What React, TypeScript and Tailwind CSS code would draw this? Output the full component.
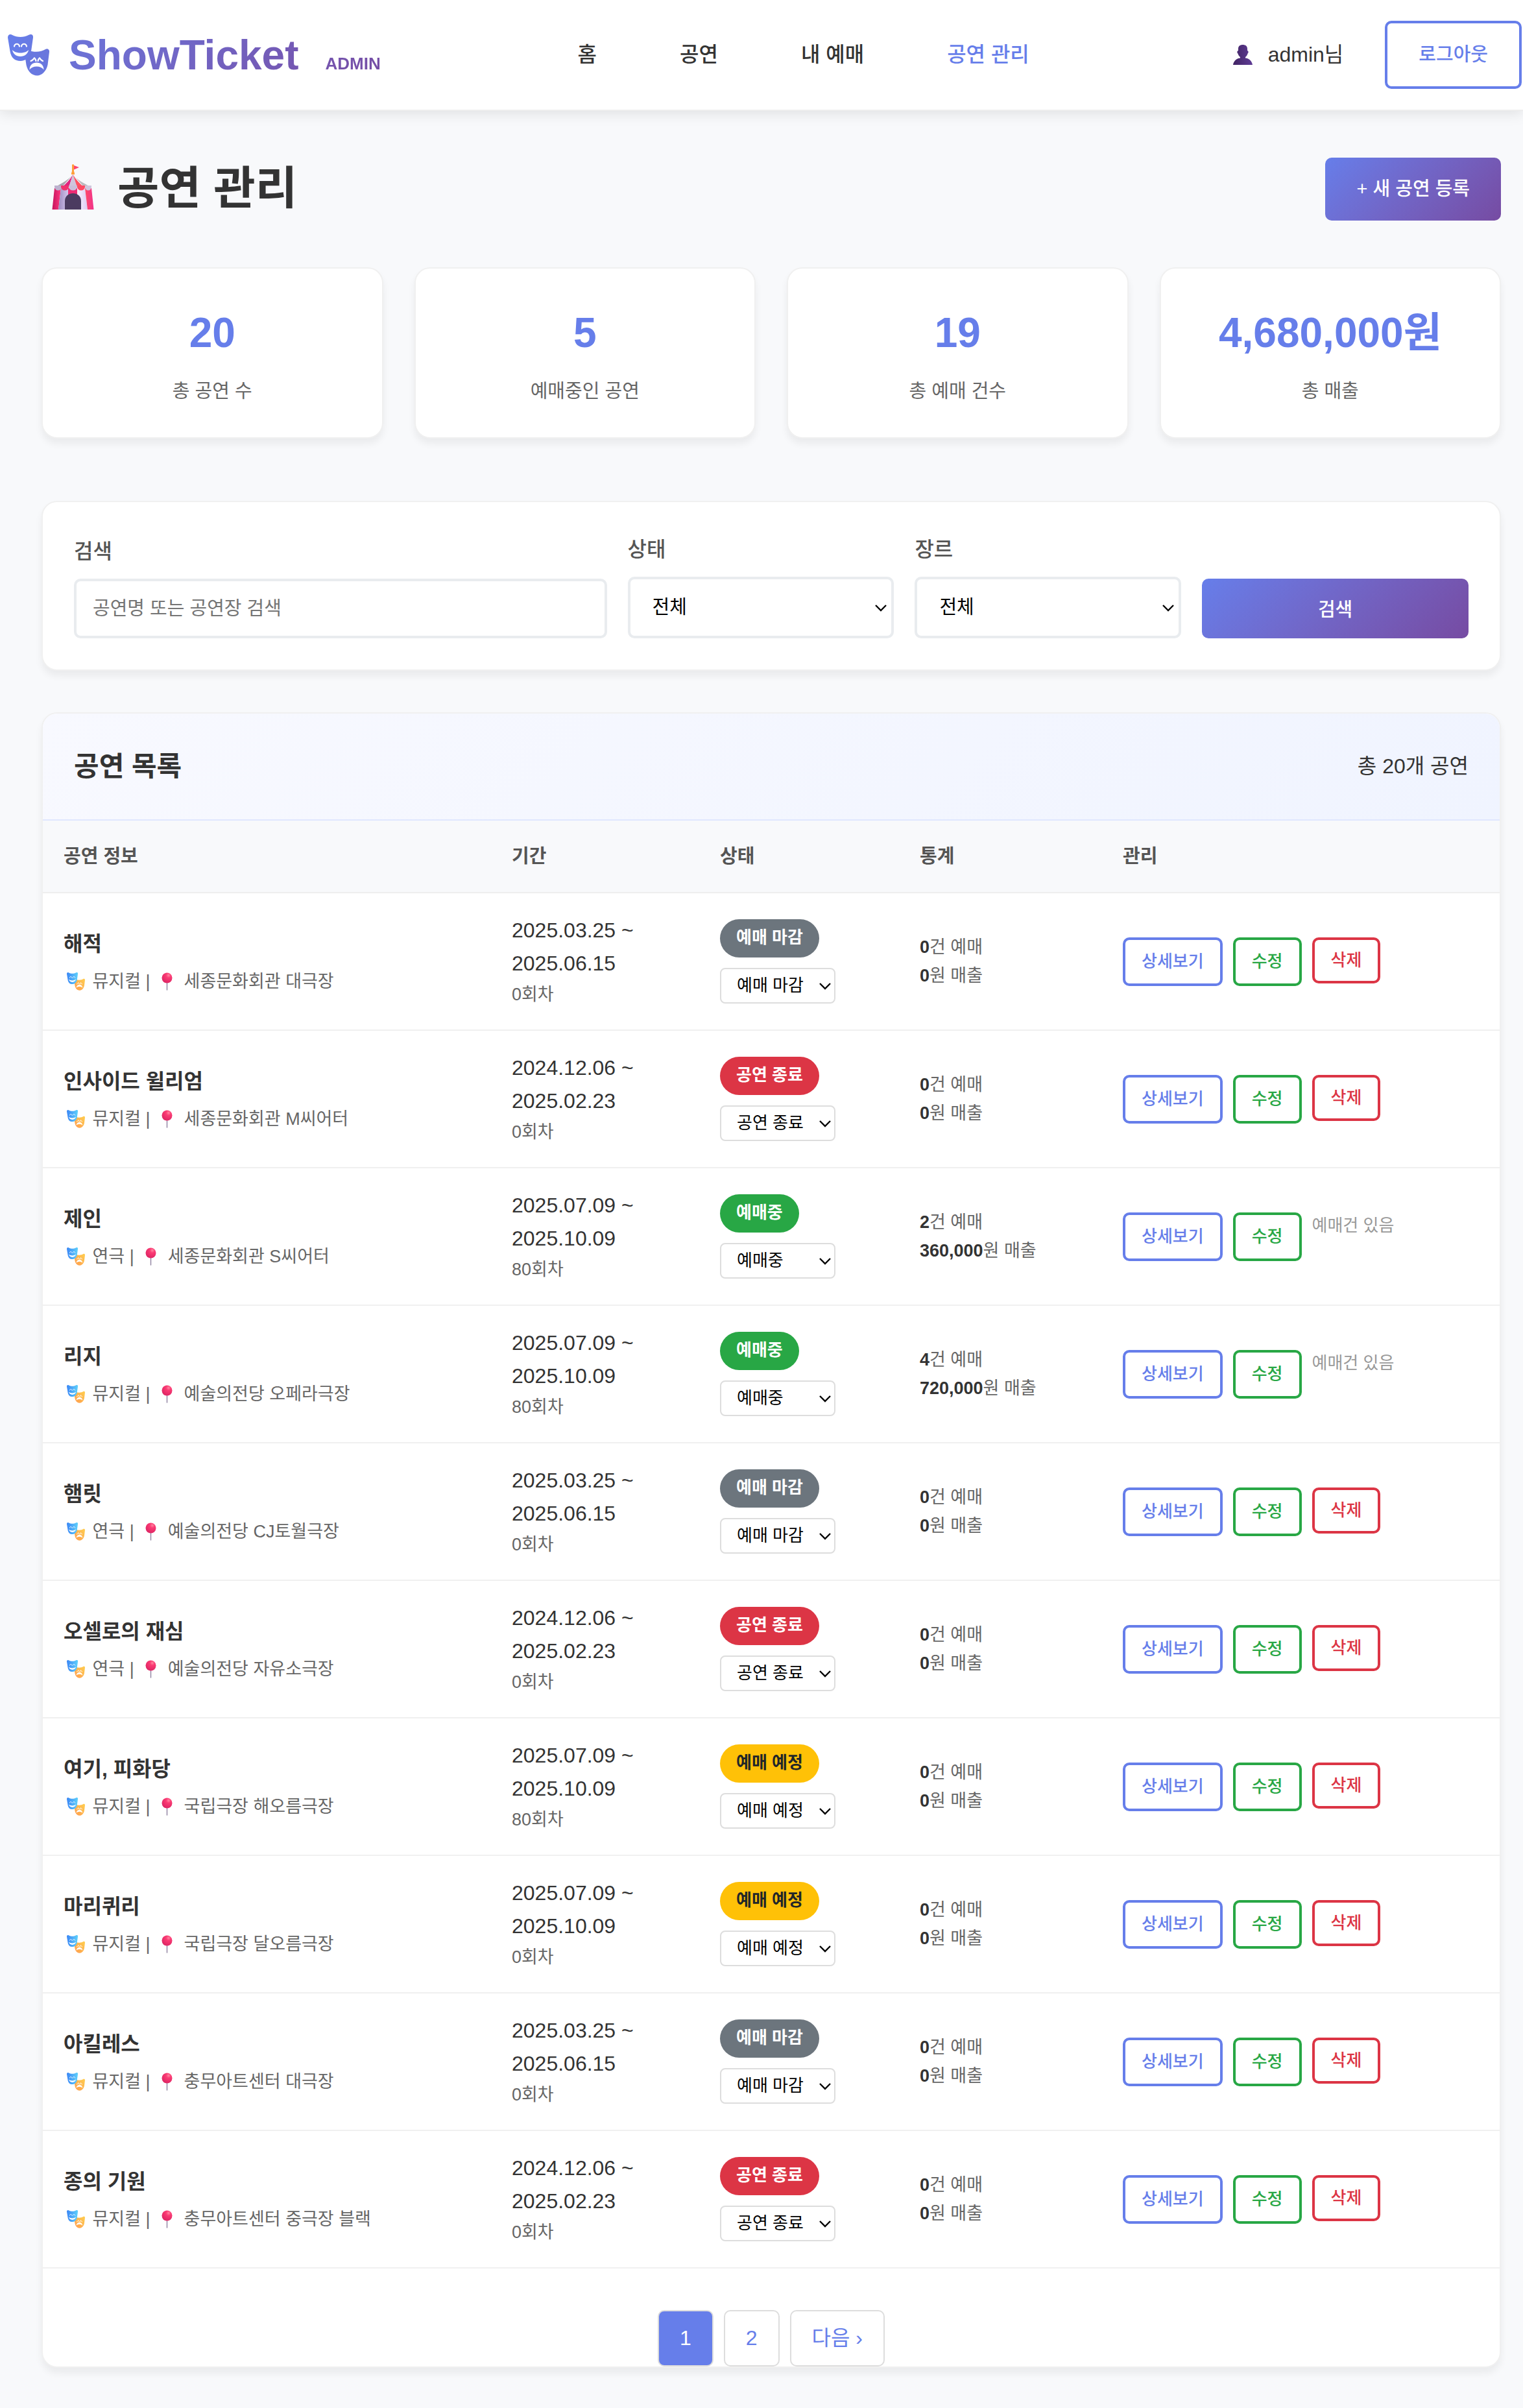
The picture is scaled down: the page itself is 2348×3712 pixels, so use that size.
import React from "react";

type Status = "예매 마감" | "공연 종료" | "예매중" | "예매 예정";

interface Show {
  title: string;
  genre: string;
  venue: string;
  start: string;
  end: string;
  rounds: number;
  status: Status;
  bookings: number;
  revenue: string;
}

const STATUSES: Status[] = ["예매 예정", "예매중", "예매 마감", "공연 종료"];

const BADGE: Record<Status, string> = {
  "예매 마감": "bg-[#6c757d] text-white",
  "공연 종료": "bg-[#dc3545] text-white",
  예매중: "bg-[#28a745] text-white",
  "예매 예정": "bg-[#ffc107] text-[#212529]",
};

const SHOWS: Show[] = [
  { title: "해적", genre: "뮤지컬", venue: "세종문화회관 대극장", start: "2025.03.25", end: "2025.06.15", rounds: 0, status: "예매 마감", bookings: 0, revenue: "0" },
  { title: "인사이드 윌리엄", genre: "뮤지컬", venue: "세종문화회관 M씨어터", start: "2024.12.06", end: "2025.02.23", rounds: 0, status: "공연 종료", bookings: 0, revenue: "0" },
  { title: "제인", genre: "연극", venue: "세종문화회관 S씨어터", start: "2025.07.09", end: "2025.10.09", rounds: 80, status: "예매중", bookings: 2, revenue: "360,000" },
  { title: "리지", genre: "뮤지컬", venue: "예술의전당 오페라극장", start: "2025.07.09", end: "2025.10.09", rounds: 80, status: "예매중", bookings: 4, revenue: "720,000" },
  { title: "햄릿", genre: "연극", venue: "예술의전당 CJ토월극장", start: "2025.03.25", end: "2025.06.15", rounds: 0, status: "예매 마감", bookings: 0, revenue: "0" },
  { title: "오셀로의 재심", genre: "연극", venue: "예술의전당 자유소극장", start: "2024.12.06", end: "2025.02.23", rounds: 0, status: "공연 종료", bookings: 0, revenue: "0" },
  { title: "여기, 피화당", genre: "뮤지컬", venue: "국립극장 해오름극장", start: "2025.07.09", end: "2025.10.09", rounds: 80, status: "예매 예정", bookings: 0, revenue: "0" },
  { title: "마리퀴리", genre: "뮤지컬", venue: "국립극장 달오름극장", start: "2025.07.09", end: "2025.10.09", rounds: 0, status: "예매 예정", bookings: 0, revenue: "0" },
  { title: "아킬레스", genre: "뮤지컬", venue: "충무아트센터 대극장", start: "2025.03.25", end: "2025.06.15", rounds: 0, status: "예매 마감", bookings: 0, revenue: "0" },
  { title: "종의 기원", genre: "뮤지컬", venue: "충무아트센터 중극장 블랙", start: "2024.12.06", end: "2025.02.23", rounds: 0, status: "공연 종료", bookings: 0, revenue: "0" },
];

const STATS = [
  { value: "20", label: "총 공연 수" },
  { value: "5", label: "예매중인 공연" },
  { value: "19", label: "총 예매 건수" },
  { value: "4,680,000원", label: "총 매출" },
];

const CARD = "rounded-3xl border-2 border-[#f0f0f0] bg-white shadow-[0_8px_12px_rgba(0,0,0,0.06)]";

/* Two theatre masks; `happy` and `sad` are the fills of the two faces. */
function Masks({ className, happy, sad, id }: { className: string; happy: [string, string]; sad: [string, string]; id: string }) {
  return (
    <svg className={className} viewBox="0 0 64 64" aria-hidden="true">
      <defs>
        <linearGradient id={`${id}-h`} x1="0" y1="0" x2="1" y2="0">
          <stop offset="0" stopColor={happy[0]} />
          <stop offset="1" stopColor={happy[1]} />
        </linearGradient>
        <linearGradient id={`${id}-s`} x1="0" y1="1" x2="1" y2="0">
          <stop offset="0" stopColor={sad[0]} />
          <stop offset="1" stopColor={sad[1]} />
        </linearGradient>
      </defs>
      <path d="M32 25C42 28 52 27 58 23C61 21 64.500 23 64 27L61.500 47C59.500 57 52 63.500 45.500 63.500C37 63.500 30.500 57 28.500 47L26 30Z" fill={`url(#${id}-s)`} />
      <path d="M0 5C0 0 4-1 7 1C14 5 25 5 32 1C36-1 39.500 0 39 5L36 26C34 36 27 41 19.500 41C11 41 5 36 3.500 26Z" fill={`url(#${id}-h)`} />
      <g fill="none" stroke="#fff" strokeWidth="2.200" strokeLinecap="round">
        <path d="M10 18.500C11 13.500 17 13.500 18 18.500" />
        <path d="M21 18.500C22 13.500 28 13.500 29 18.500" />
        <path d="M35.500 41C38.500 40 41 37 40.500 35.800C42 37 43 38 43.500 41" />
        <path d="M46.500 41C47 38 48 37 49.500 35.800C49 37 51.500 40 54 41" />
      </g>
      <path d="M7 24C12 30 27 30 32 24C31 30 26 34 19.500 34C13 34 8 30 7 24Z" fill="#fff" />
      <path d="M33.500 54.500C34 47 38 43.500 44.500 43.500C51 43.500 55 47 55.500 54.500C53 51 49 49.500 44.500 49.500C40 49.500 36 51 33.500 54.500Z" fill="#fff" />
    </svg>
  );
}

function Tent() {
  return (
    <svg className="mb-2 h-[70px] w-[65px] shrink-0" viewBox="0 0 65 70" aria-hidden="true">
      <defs>
        <linearGradient id="tent-l" x1="0" x2="1">
          <stop offset="0" stopColor="#c4135c" />
          <stop offset="1" stopColor="#ff3a80" />
        </linearGradient>
        <linearGradient id="tent-g" x1="0" x2="1">
          <stop offset="0" stopColor="#9c8abf" />
          <stop offset="1" stopColor="#d3c4ec" />
        </linearGradient>
        <linearGradient id="tent-w" x1="0" x2="1">
          <stop offset="0" stopColor="#fbf3ff" />
          <stop offset="1" stopColor="#dccaf3" />
        </linearGradient>
        <linearGradient id="tent-r" x1="0" x2="1">
          <stop offset="0" stopColor="#ff4a68" />
          <stop offset="1" stopColor="#f0328c" />
        </linearGradient>
      </defs>
      <path d="M4 37H14L10 70H0.500Z" fill="url(#tent-l)" />
      <path d="M14 37H25V70H10Z" fill="url(#tent-g)" />
      <path d="M25 37H39V70H25Z" fill="#ee2b74" />
      <path d="M39 37H51L55 70H39Z" fill="url(#tent-w)" />
      <path d="M51 37H61L64.500 70H55Z" fill="url(#tent-r)" />
      <path d="M32.500 16C26 24 16 29 4 36H15Z" fill="#aaa6ad" />
      <path d="M32.500 16C28 24 22 30 15 36H26Z" fill="#e0267f" />
      <path d="M32.500 16L26 36H39Z" fill="#d0c5dc" />
      <path d="M32.500 16L39 36H50C43 30 37 24 32.500 16Z" fill="#ff5262" />
      <path d="M32.500 16C38 24 49 29 61 36H50Z" fill="#bdb9be" />
      <g>
        <path d="M4 33H15V35A5.500 5.500 0 0 1 4 35Z" fill="#bdb2cf" />
        <path d="M14 33H26V35A6 5.500 0 0 1 14 35Z" fill="#f0336e" />
        <path d="M26 33H39V35A6.500 5.500 0 0 1 26 35Z" fill="#cbbfda" />
        <path d="M39 33H51V35A6 5.500 0 0 1 39 35Z" fill="#ff4a63" />
        <path d="M51 33H61V35A5 5.500 0 0 1 51 35Z" fill="#cfc6dc" />
      </g>
      <path d="M20 70V57C20 49 26 45 32.500 45C39 45 45 49 45 57V70Z" fill="#4b3b60" />
      <path d="M34 2L42 5L34 8.500Z" fill="#ff4470" />
      <path d="M31 0.500H34V11L35 14V16H30V14L31 11Z" fill="#ff9f3a" />
    </svg>
  );
}

function Pin() {
  return (
    <svg className="inline-block h-7 w-[37px] align-[-5px]" viewBox="0 0 37 28" aria-hidden="true">
      <defs>
        <radialGradient id="pin-ball" cx="0.650" cy="0.250" r="0.800">
          <stop offset="0" stopColor="#ff86a0" />
          <stop offset="0.300" stopColor="#fb3b74" />
          <stop offset="1" stopColor="#dc2463" />
        </radialGradient>
      </defs>
      <path d="M18.500 14V27" stroke="#9487a5" strokeWidth="1.500" strokeLinecap="round" />
      <circle cx="18.500" cy="8.500" r="8" fill="url(#pin-ball)" />
    </svg>
  );
}

function Person() {
  return (
    <svg className="h-[31px] w-[30px]" viewBox="0 0 30 31" aria-hidden="true">
      <defs>
        <linearGradient id="person-fill" x1="0" x2="1">
          <stop offset="0" stopColor="#412463" />
          <stop offset="1" stopColor="#5f3c96" />
        </linearGradient>
      </defs>
      <path
        d="M8 6C8 2 11 0 15 0C19 0 22 2 22 6V9C24 9 24 13 22.500 13.500C22 16 20.500 18 19 19V20.500C25 21 29 25 30 31H0C1 25 5 21 11 20.500V19C9.500 18 8 16 7.500 13.500C6 13 6 9 8 9Z"
        fill="url(#person-fill)"
      />
    </svg>
  );
}

function Chevron({ className }: { className: string }) {
  return (
    <svg className={`pointer-events-none absolute top-1/2 h-3 w-5 -translate-y-1/2 ${className}`} viewBox="0 0 20 12" fill="none" aria-hidden="true">
      <path d="M2 2L10 10L18 2" stroke="#000" strokeWidth="2.400" />
    </svg>
  );
}

function FilterSelect({ id, label, options }: { id: string; label: string; options: string[] }) {
  return (
    <div>
      <label htmlFor={id} className="mb-4 block text-[32px] leading-[51px] font-medium text-[#555]">
        {label}
      </label>
      <div className="relative">
        <select id={id} className="block h-[95px] w-full appearance-none rounded-[10px] border-4 border-[#e9ecef] bg-white pr-12 pl-[34px] text-[29px] text-black">
          {options.map((o) => (
            <option key={o}>{o}</option>
          ))}
        </select>
        <Chevron className="right-2.5" />
      </div>
    </div>
  );
}

function ShowRow({ show }: { show: Show }) {
  return (
    <tr className="border-b-2 border-[#f0f0f0]">
      <td className="px-8 py-8">
        <div className="mb-2.5 text-[32px] leading-[51px] font-bold">{show.title}</div>
        <div className="text-[27px] leading-[44px] text-[#666]">
          <span className="inline-block w-[37px] pl-[5px] align-[-5px]">
            <Masks id="row-mask" className="block h-7 w-7" happy={["#3a86f5", "#5fd0fb"]} sad={["#ff9a4d", "#ffcf4f"]} />
          </span>{" "}
          {show.genre} | <Pin /> {show.venue}
        </div>
      </td>
      <td className="px-8 py-8">
        <div className="text-[32px] leading-[51px]">
          {show.start} ~<br />
          {show.end}
        </div>
        <div className="text-[27px] leading-[44px] text-[#666]">{show.rounds}회차</div>
      </td>
      <td className="px-8">
        <div className="flex flex-col items-start gap-4">
          <span className={`rounded-full px-[25px] pt-2 pb-2.5 text-[26px] leading-[41px] font-bold ${BADGE[show.status]}`}>{show.status}</span>
          <div className="relative">
            <select
              aria-label={`${show.title} 상태`}
              defaultValue={show.status}
              className="block h-[55px] w-[178px] appearance-none rounded-lg border-2 border-[#ddd] bg-white pr-10 pl-6 text-[26px] text-black"
            >
              {STATUSES.map((s) => (
                <option key={s}>{s}</option>
              ))}
            </select>
            <Chevron className="right-1.5" />
          </div>
        </div>
      </td>
      <td className="px-8 text-[27px] leading-[44px] text-[#666]">
        <div>
          <strong className="text-[#333]">{show.bookings}</strong>건 예매
        </div>
        <div>
          <strong className="text-[#333]">{show.revenue}</strong>원 매출
        </div>
      </td>
      <td className="px-8">
        <div className="flex items-start gap-4 text-[26px] font-medium">
          <a href="#detail" className="rounded-[10px] border-4 border-[#667eea] px-[25px] py-[13px] leading-[41px] text-[#667eea]">
            상세보기
          </a>
          <a href="#edit" className="rounded-[10px] border-4 border-[#28a745] px-[25px] py-[13px] leading-[41px] text-[#28a745]">
            수정
          </a>
          {show.bookings > 0 ? (
            <span className="leading-[41px] font-normal text-[#999]">예매건 있음</span>
          ) : (
            <button type="button" className="rounded-[10px] border-4 border-[#dc3545] px-[25px] py-[13px] leading-[37px] text-[#dc3545]">
              삭제
            </button>
          )}
        </div>
      </td>
    </tr>
  );
}

export default function App() {
  return (
    <div className="min-h-screen bg-[#f8f9fb] font-['Liberation_Sans','Noto_Sans_CJK_KR',sans-serif] text-[32px] leading-[51px] text-[#333]">
      <header className="relative border-b-2 border-[#eee] bg-white px-0.5 py-8 shadow-[0_4px_20px_rgba(0,0,0,0.1)]">
        <div className="flex items-center justify-between">
          <a href="#home" className="flex items-center pl-2.5">
            <Masks id="logo-mask" className="h-16 w-16" happy={["#667eea", "#687ae3"]} sad={["#6879e2", "#6a76dc"]} />
            <span className="ml-[30px] flex items-baseline gap-[41px] bg-linear-135 from-[#6a76dc] to-[#764ba2] bg-clip-text text-[64px] leading-[102px] font-bold text-transparent">
              ShowTicket
              <span className="text-[26px] leading-[41px]">ADMIN</span>
            </span>
          </a>
          <nav className="flex gap-32 font-medium">
            <a href="#home">홈</a>
            <a href="#shows">공연</a>
            <a href="#bookings">내 예매</a>
            <a href="#manage" className="text-[#667eea]">
              공연 관리
            </a>
          </nav>
          <div className="flex items-center gap-16 pl-2.5">
            <span className="flex items-center gap-6">
              <Person />
              admin님
            </span>
            <button type="button" className="rounded-[10px] border-4 border-[#667eea] px-12 py-[25px] text-[29px] leading-[47px] font-medium text-[#667eea]">
              로그아웃
            </button>
          </div>
        </div>
      </header>

      <main className="py-16 pr-[34px] pl-16">
        <div className="mb-16 flex items-center justify-between">
          <h1 className="flex items-center gap-9 pl-4 text-[70px] leading-[113px] font-bold">
            <Tent />
            공연 관리
          </h1>
          <a href="#new" className="rounded-[10px] bg-linear-135 from-[#667eea] to-[#764ba2] px-12 py-[25px] text-[29px] leading-[47px] font-medium text-white">
            + 새 공연 등록
          </a>
        </div>

        <section className="mb-24 grid grid-cols-4 gap-12">
          {STATS.map((s) => (
            <div key={s.label} className={`${CARD} p-12 text-center`}>
              <div className="text-[64px] leading-[102px] font-bold whitespace-nowrap text-[#667eea]">{s.value}</div>
              <div className="mt-4 text-[29px] leading-[46px] text-[#666]">{s.label}</div>
            </div>
          ))}
        </section>

        <form className={`${CARD} mb-16 grid grid-cols-[2fr_1fr_1fr_1fr] items-end gap-8 p-12`} onSubmit={(e) => e.preventDefault()}>
          <div>
            <label htmlFor="keyword" className="mb-4 block leading-[51px] font-medium text-[#555]">
              검색
            </label>
            <input
              id="keyword"
              type="text"
              placeholder="공연명 또는 공연장 검색"
              className="block h-[92px] w-full rounded-[10px] border-4 border-[#e9ecef] bg-white px-[25px] text-[29px] placeholder:text-[#757575]"
            />
          </div>
          <FilterSelect id="status" label="상태" options={["전체", ...STATUSES]} />
          <FilterSelect id="genre" label="장르" options={["전체", "뮤지컬", "연극"]} />
          <button type="submit" className="h-[92px] rounded-[10px] bg-linear-135 from-[#667eea] to-[#764ba2] pt-1 text-[29px] font-medium text-white">
            검색
          </button>
        </form>

        <section className={`${CARD} overflow-hidden`}>
          <div className="flex items-center justify-between border-b-2 border-[#e0e7ff] bg-linear-135 from-[#f8f9ff] to-[#f0f4ff] p-12">
            <h2 className="text-[42px] leading-[67px] font-bold">공연 목록</h2>
            <span>총 20개 공연</span>
          </div>
          <table className="w-full table-fixed border-collapse text-left">
            <colgroup>
              <col className="w-[691px]" />
              <col className="w-[321px]" />
              <col className="w-[308px]" />
              <col className="w-[313px]" />
              <col />
            </colgroup>
            <thead>
              <tr className="border-b-2 border-[#eee] bg-[#f8f9fb] text-[29px] leading-[46px] text-[#555]">
                {["공연 정보", "기간", "상태", "통계", "관리"].map((h) => (
                  <th key={h} scope="col" className="px-8 py-8 font-bold">
                    {h}
                  </th>
                ))}
              </tr>
            </thead>
            <tbody>
              {SHOWS.map((s) => (
                <ShowRow key={s.title} show={s} />
              ))}
            </tbody>
          </table>
          <nav aria-label="페이지" className="mt-16 flex justify-center gap-4 text-[#667eea]">
            <a href="#p1" aria-current="page" className="rounded-[10px] border-2 border-[#ddd] bg-[#667eea] px-8 py-4 text-white">
              1
            </a>
            <a href="#p2" className="rounded-[10px] border-2 border-[#ddd] px-8 py-4">
              2
            </a>
            <a href="#next" className="rounded-[10px] border-2 border-[#ddd] px-8 py-4">
              다음 ›
            </a>
          </nav>
        </section>
      </main>
    </div>
  );
}
